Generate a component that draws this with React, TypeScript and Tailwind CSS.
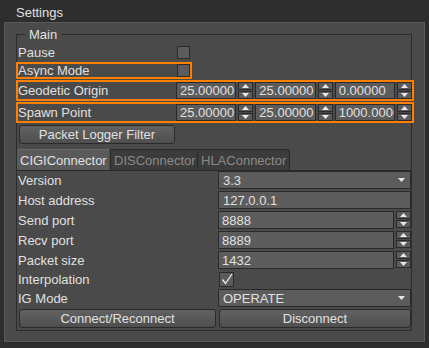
import type { ReactNode } from "react";

const field = "border border-[#2a2a2a] bg-[#5c5c5c]";

function Arrow({ up }: { up?: boolean }) {
  return (
    <svg width="7" height="4" viewBox="0 0 7 4" className="block">
      <polygon points={up ? "0,4 3.5,0 7,4" : "0,0 7,0 3.5,4"} fill="#e8e8e8" />
    </svg>
  );
}

function SpinButtons() {
  return (
    <div className="flex w-[15px] shrink-0 flex-col gap-px">
      <div className={`flex h-[8px] items-center justify-center ${field}`}>
        <Arrow up />
      </div>
      <div className={`flex h-[8px] items-center justify-center ${field}`}>
        <Arrow />
      </div>
    </div>
  );
}

function SpinBox({ value }: { value: string }) {
  return (
    <div className="flex h-full w-0 min-w-0 flex-1 gap-[2px]">
      <div className={`flex w-0 min-w-0 flex-1 items-center overflow-hidden whitespace-nowrap pl-[3px] ${field}`}>
        {value}
      </div>
      <SpinButtons />
    </div>
  );
}

function Combo({ value }: { value: string }) {
  return (
    <div className={`flex h-full flex-1 items-center justify-between pl-[4px] pr-[5px] ${field}`}>
      <span>{value}</span>
      <Arrow />
    </div>
  );
}

function CheckBox({ checked, size = 13 }: { checked?: boolean; size?: number }) {
  return (
    <div
      className={`ml-px flex items-center justify-center ${field}`}
      style={{ width: size, height: size }}
    >
      {checked && (
        <svg width="12" height="12" viewBox="0 0 12 12">
          <polyline points="1.5,6.5 4.5,10.5 11,1" fill="none" stroke="#eeeeee" strokeWidth="1.3" />
        </svg>
      )}
    </div>
  );
}

function Button({ children, className = "" }: { children: ReactNode; className?: string }) {
  return (
    <div
      className={`flex items-center justify-center rounded-[3px] border border-[#2a2a2a] bg-gradient-to-b from-[#626262] to-[#4e4e4e] ${className}`}
    >
      {children}
    </div>
  );
}

function Row({ label, children, h, labelW, className = "" }: { label: string; children: ReactNode; h: string; labelW: string; className?: string }) {
  return (
    <div className={`flex items-center ${h} ${className}`}>
      <div className={`${labelW} shrink-0`}>{label}</div>
      {children}
    </div>
  );
}

const hi = "outline-2 outline-[#ff7f00]";

export default function App() {
  return (
    <div className="h-[348px] w-[429px] overflow-hidden bg-[#2d2d2d] font-['Liberation_Sans',Arial,sans-serif] text-[13px] leading-[15px] text-[#e0e0e0]">
      <div className="h-[22px] pl-[16px] pt-[5px]">Settings</div>

      <div className="ml-[4px] h-[320px] w-[421px] border border-[#5a5a5a] bg-[#4a4a4a] pl-[11px] pt-[4px]">
        <fieldset className="w-[396px] min-w-0 border border-[#2c2c2c] pb-[2px]">
          <legend className="ml-[8px] px-[4px]">Main</legend>

          <div className="flex flex-col pl-px">
            <Row label="Pause" labelW="w-[158px]" h="h-[14px] mt-[3px]">
              <CheckBox />
            </Row>
            <Row label="Async Mode" labelW="w-[158px]" h="h-[13px] mt-[5px] w-[172px]" className={hi}>
              <CheckBox />
            </Row>
            <Row label="Geodetic Origin" labelW="w-[156px]" h="h-[17px] mt-[5px] mr-[-1px]" className={`${hi} gap-[2px]`}>
              <SpinBox value="25.00000" />
              <SpinBox value="25.00000" />
              <SpinBox value="0.00000" />
            </Row>
            <Row label="Spawn Point" labelW="w-[156px]" h="h-[17px] mt-[5px] mr-[-1px]" className={`${hi} gap-[2px]`}>
              <SpinBox value="25.00000" />
              <SpinBox value="25.00000" />
              <SpinBox value="1000.00000" />
            </Row>
            <Button className="ml-px mt-[4px] h-[19px] w-[156px]">Packet Logger Filter</Button>
          </div>

          <div className="mt-[5px] flex h-[21px] items-stretch">
            <div className="flex w-[92px] items-center rounded-tl-[2px] border-t border-[#6a6a6a] bg-[#5a5a5a] pl-[3px]">
              CIGIConnector
            </div>
            <div className="ml-px flex w-[88px] items-center border border-b-0 border-[#2a2a2a] bg-[#3c3c3c] pl-[3px] text-[#8a8a8a]">
              DISConnector
            </div>
            <div className="flex w-[92px] items-center rounded-tr-[3px] border border-b-0 border-l-0 border-[#2a2a2a] bg-[#3c3c3c] pl-[3px] text-[#8a8a8a]">
              HLAConnector
            </div>
          </div>

          <div className="flex flex-col gap-[2px] border-t border-[#2a2a2a] pl-px">
            <Row label="Version" labelW="w-[200px]" h="h-[18px]">
              <Combo value="3.3" />
            </Row>
            <Row label="Host address" labelW="w-[200px]" h="h-[18px]">
              <div className={`flex h-full flex-1 items-center pl-[4px] ${field}`}>127.0.0.1</div>
            </Row>
            <Row label="Send port" labelW="w-[200px]" h="h-[18px]">
              <SpinBox value="8888" />
            </Row>
            <Row label="Recv port" labelW="w-[200px]" h="h-[18px]">
              <SpinBox value="8889" />
            </Row>
            <Row label="Packet size" labelW="w-[200px]" h="h-[18px]">
              <SpinBox value="1432" />
            </Row>
            <Row label="Interpolation" labelW="w-[200px]" h="h-[16px]">
              <CheckBox checked size={15} />
            </Row>
            <Row label="IG Mode" labelW="w-[200px]" h="h-[18px]">
              <Combo value="OPERATE" />
            </Row>
            <div className="flex h-[19px]">
              <Button className="ml-px mr-[2px] w-[197px]">Connect/Reconnect</Button>
              <Button className="ml-px flex-1">Disconnect</Button>
            </div>
          </div>
        </fieldset>
      </div>
    </div>
  );
}
